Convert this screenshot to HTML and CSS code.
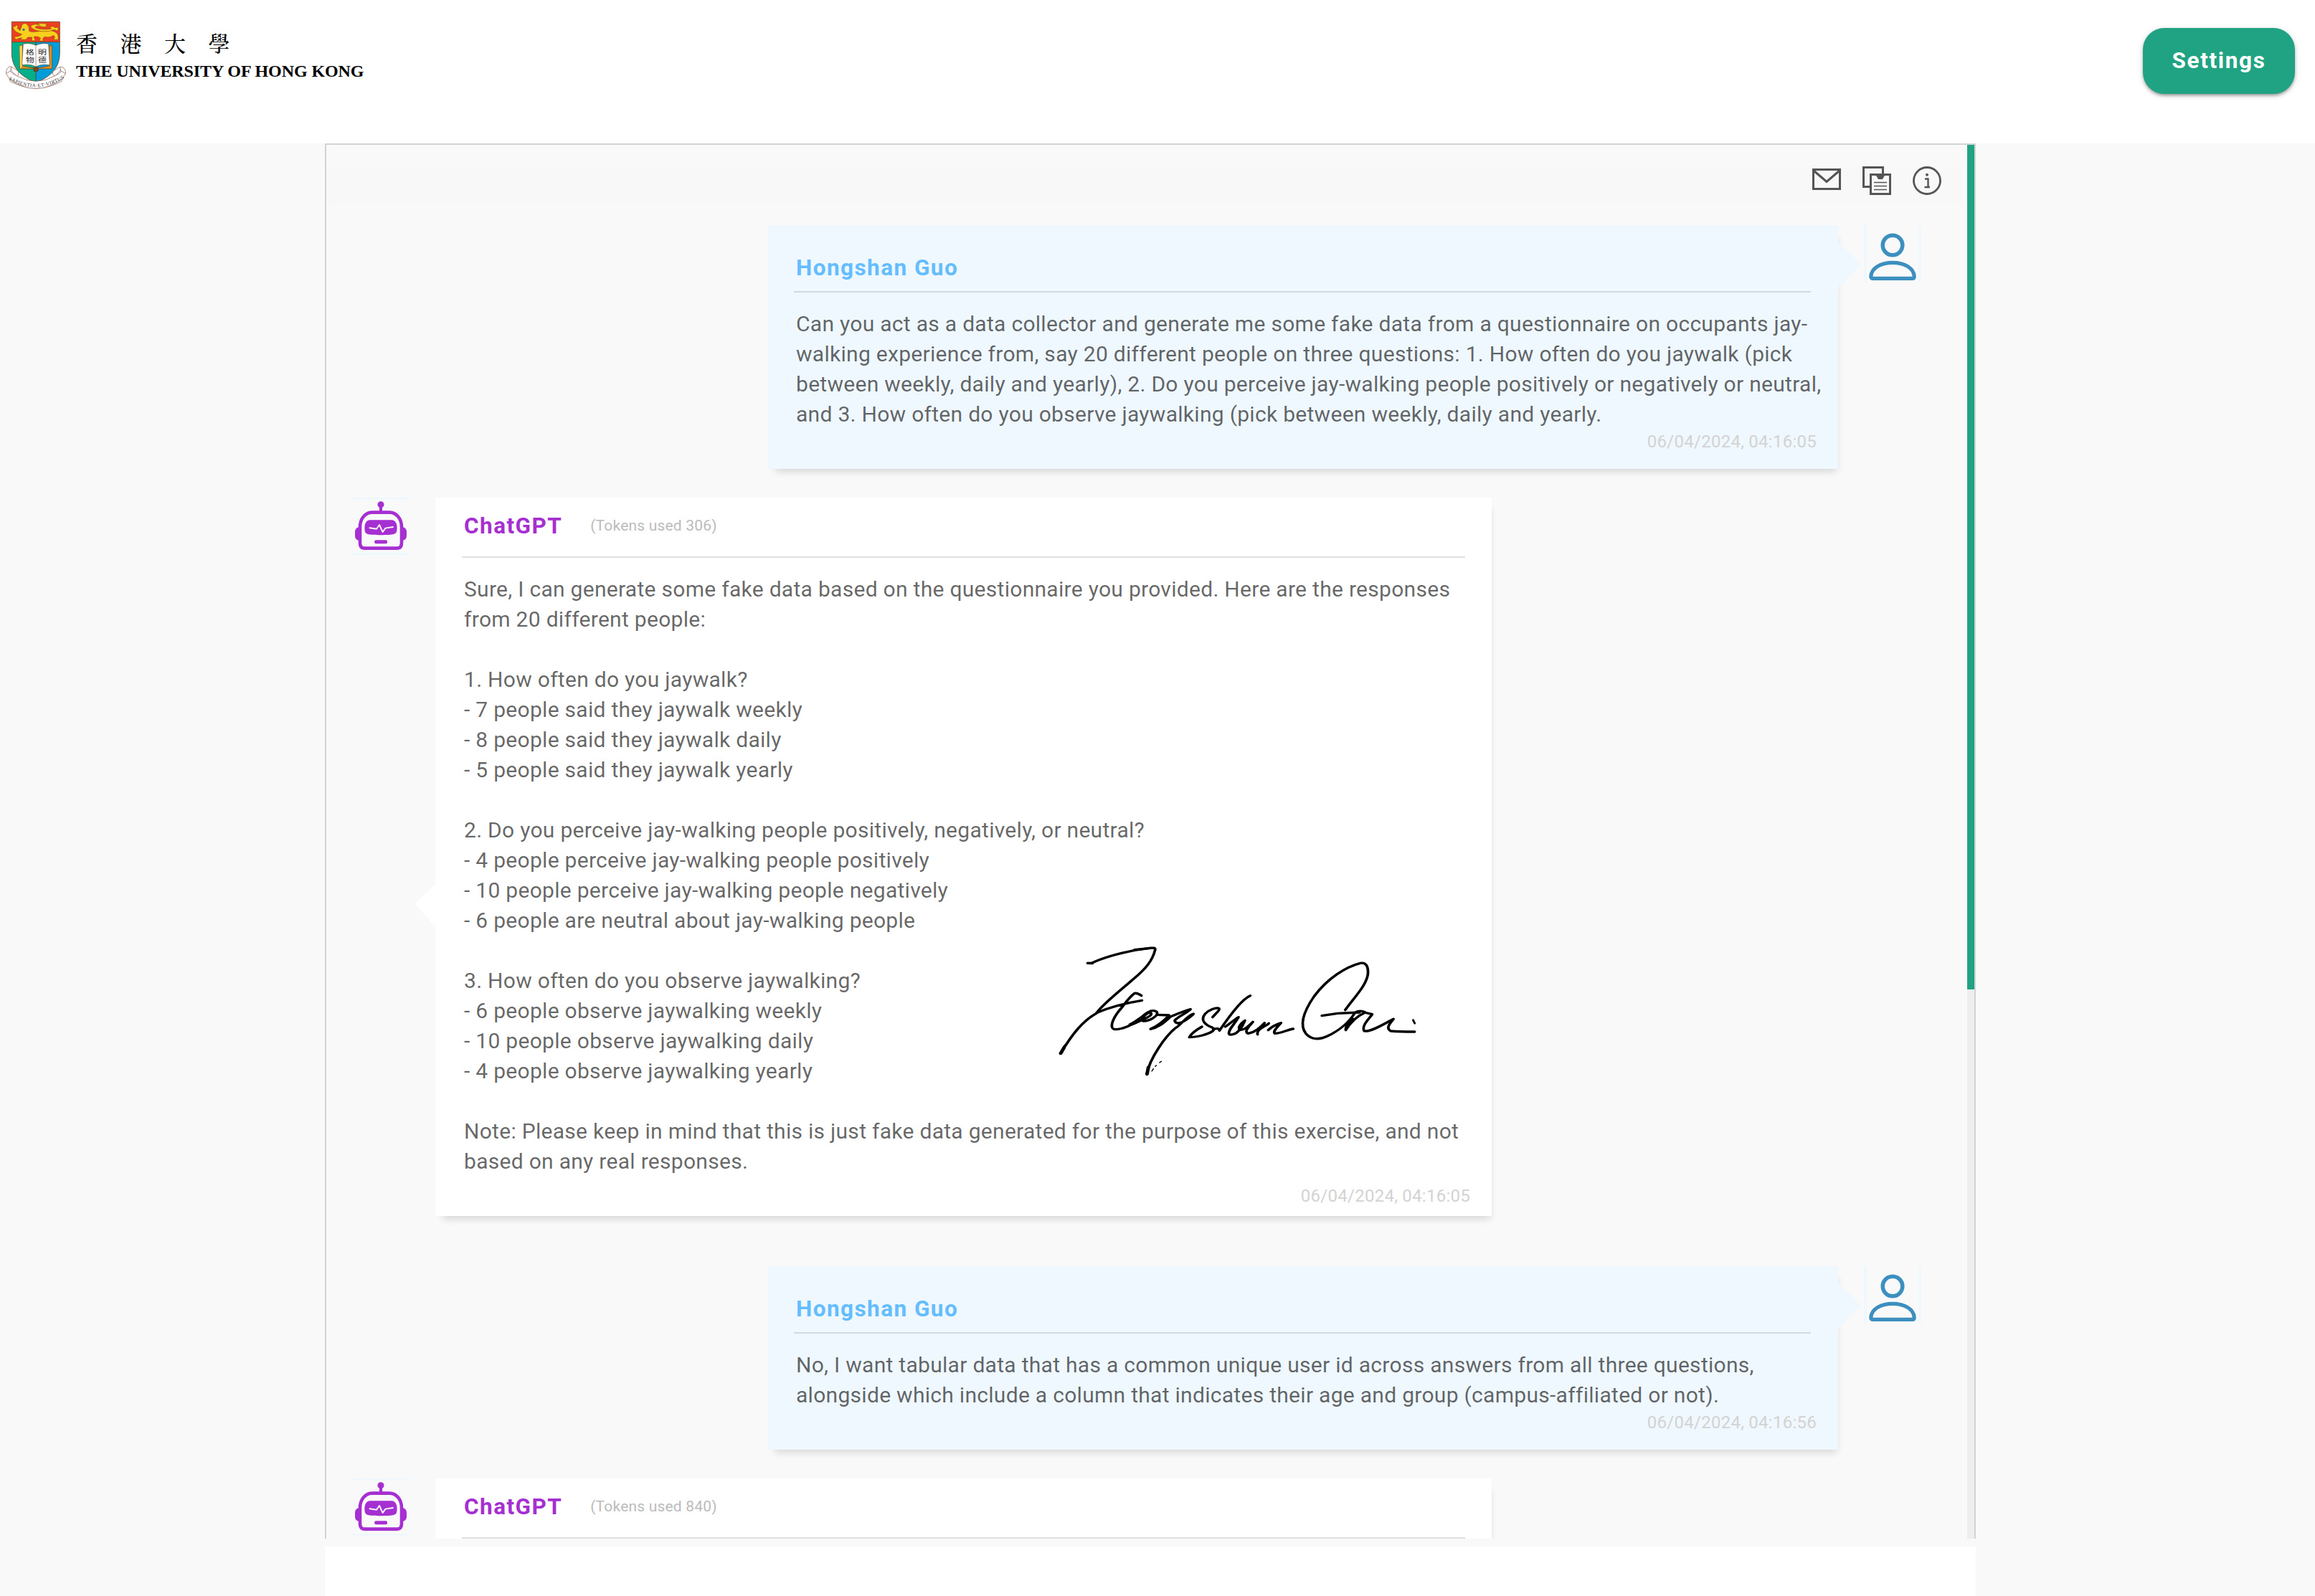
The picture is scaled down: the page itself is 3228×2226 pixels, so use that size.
FILE: index.html
```html
<!DOCTYPE html>
<html lang="en">
<head>
<meta charset="utf-8">
<title>Chat</title>
<link rel="stylesheet" href="styles.css">
</head>
<body>
<header class="header">
  <div class="brand">
    <svg class="crest" viewBox="0 0 300 330" width="100" height="110" role="img" aria-label="Crest">
      <defs>
        <clipPath id="shield"><path d="M49 31H250V160C250 226 210 262 150 286C90 262 49 226 49 160Z"/></clipPath>
        <path id="motto" d="M36 272Q150 338 264 270"/>
      </defs>
      <path d="M48 220C36 215 26 228 25 246L40 262L42 280Q150 338 258 280L260 262L275 246C274 228 262 215 250 222L262 262Q150 318 38 262Z" fill="#fff" stroke="#7d5545" stroke-width="2"/>
      <g clip-path="url(#shield)">
        <rect x="48" y="30" width="204" height="86" fill="#ee3f23"/>
        <rect x="48" y="116" width="102" height="180" fill="#00b08b"/>
        <rect x="150" y="116" width="102" height="180" fill="#009ddb"/>
      </g>
      <g fill="#f8cf1c" stroke="#7a3f12" stroke-width="1.6" stroke-linejoin="round">
        <path d="M92 45C96 36 112 36 116 46C124 54 120 64 122 70C140 80 165 66 196 70C216 64 232 72 240 82C246 92 242 100 244 106H222C230 100 232 92 222 88C212 98 196 96 186 94L178 104L184 111H164L170 100C160 92 150 92 142 94L148 110H132L134 96L116 96L108 106H86L92 98L80 100L66 106L60 94L78 92L92 84L72 76C62 68 54 62 55 50L62 52L68 44L76 50L72 58L84 68Z"/>
        <path d="M132 56C120 44 150 38 166 44L158 37C174 40 186 38 200 40L190 46C204 50 190 54 178 52C160 46 146 48 148 56C170 64 196 64 216 60L206 54L220 50L232 56L246 54L240 70L226 64C204 76 150 74 132 56Z"/>
      </g>
      <circle cx="99" cy="64" r="5" fill="#2377a8"/>
      <path d="M49 31H250V160C250 226 210 262 150 286C90 262 49 226 49 160ZM49 116H250M150 116V286" fill="none" stroke="#6a3c1c" stroke-width="2.6"/>
      <path d="M82 133L94 128V216L150 226L206 216V128L218 133V228H160Q150 240 140 228H82Z" fill="#d8922b" stroke="#6a3c1c" stroke-width="2"/>
      <path d="M82 133L92 130V218L84 228Z" fill="#ffd84d"/>
      <path d="M97 124Q128 118 150 130Q172 118 203 124L208 212Q172 206 150 220Q128 206 92 212Z" fill="#fff" stroke="#6a3c1c" stroke-width="1.6"/>
      <path d="M150 130V220" stroke="#6a3c1c" stroke-width="1.6"/>
      <circle cx="150" cy="230" r="10" fill="#7b4a1e" stroke="#4e2b10" stroke-width="2"/>
      <g class="crest-book"><text x="107" y="168" textLength="36" lengthAdjust="spacingAndGlyphs">格</text><text x="107" y="201" textLength="36" lengthAdjust="spacingAndGlyphs">物</text><text x="159" y="168" textLength="36" lengthAdjust="spacingAndGlyphs">明</text><text x="159" y="201" textLength="36" lengthAdjust="spacingAndGlyphs">德</text></g>
      <path d="M48 220C40 236 58 246 70 258L78 252L76 238L58 226Z M250 220C260 236 242 246 230 258L220 250L222 238L240 226Z" fill="#fff" stroke="#7d5545" stroke-width="2"/>
      <path d="M26 248L38 268Q150 354 262 268L274 248L258 238Q244 252 228 258Q150 302 72 258Q56 252 42 238Z" fill="#fff" stroke="#7d5545" stroke-width="2"/>
      <text class="crest-motto"><textPath href="#motto" textLength="246">SAPIENTIA·ET·VIRTUS</textPath></text>
    </svg>
    <div class="brand-text">
      <div class="brand-zh" lang="zh-Hant">香港大學</div>
      <div class="brand-en">THE UNIVERSITY OF HONG KONG</div>
    </div>
  </div>
  <button class="settings" type="button">Settings</button>
</header>

<svg class="symbols" width="0" height="0" aria-hidden="true">
  <symbol id="person" viewBox="0 0 72 80">
    <g fill="none" stroke="#3c8fbf" stroke-width="5.5">
      <circle cx="36" cy="28" r="13.8"/>
      <path d="M5.800 71.500C6.500 60 19 52.400 36 52.400S65.500 60 66.200 71.500Q66.200 74.400 63.500 74.400H8.500Q5.800 74.400 5.800 71.500Z" stroke-width="5.200"/>
    </g>
  </symbol>
  <symbol id="bot" viewBox="0 0 80 80">
    <g fill="#a62fd1">
      <circle cx="40" cy="9.700" r="4.500"/>
      <rect x="38" y="10" width="4" height="10"/>
      <path d="M9.500 41.500H8Q4 43 4 48V53Q4 58 8 59.500H9.500ZM70.500 41.500H72Q76 43 76 48V53Q76 58 72 59.500H70.500Z"/>
      <path d="M40 31.300C50 31.300 53 30.800 57 31.500C61 33 62.600 37 62.600 42C62.600 48 61.500 50 58 51C52 52.600 28 52.600 22 51C18.500 50 17.400 48 17.400 42C17.400 37 19 33 23 31.500C27 30.800 30 31.300 40 31.300Z"/>
      <rect x="31.200" y="59.300" width="17.800" height="4.900" rx="2"/>
    </g>
    <path d="M28 20.600H52C62 20.600 69 30 69 41V63Q69 70.600 63 70.600H17Q11 70.600 11 63V41C11 30 18 20.600 28 20.600Z" fill="none" stroke="#a62fd1" stroke-width="4.600"/>
    <path d="M24.500 42.300L34 43.700L38 38L42.600 48L46.500 42.600L57 41" fill="none" stroke="#f9f9f9" stroke-width="1.900" stroke-linecap="round" stroke-linejoin="round"/>
  </symbol>
</svg>

<main class="page">
  <section class="panel">
    <div class="feed">
      <div class="toolbar">
        <svg width="40" height="40" viewBox="0 0 40 40" fill="none" stroke="#555" stroke-width="3"><rect x="1.500" y="4.500" width="37" height="27"/><path d="M2 6L20 21.500L38 6" stroke-width="3.200"/></svg>
        <svg width="40" height="40" viewBox="0 0 40 40" fill="none" stroke="#555" stroke-width="3"><path d="M10 28.500H1.500V1.500H28.500V10"/><rect x="11.500" y="11.500" width="27" height="27"/><path d="M18 12H32L29.500 15Q29 18 27 18H23Q21 18 20.500 15Z" fill="#555" stroke="none"/><path d="M16 22.500H34M16 27.500H34M16 32.500H34" stroke-width="1.500"/></svg>
        <svg width="40" height="40" viewBox="0 0 40 40" fill="none" stroke="#555" stroke-width="2.800"><circle cx="20" cy="20" r="18.500"/><circle cx="20" cy="11.700" r="2" fill="#555" stroke="none"/><path d="M17 17.500H21.500V28.500M16.500 29H24" stroke-width="2.400"/></svg>
      </div>

      <article class="row row-user">
        <div class="bubble bubble-user">
          <div class="name">Hongshan Guo</div>
          <hr class="rule">
          <p class="body">Can you act as a data collector and generate me some fake data from a questionnaire on occupants jay-<br>walking experience from, say 20 different people on three questions: 1. How often do you jaywalk (pick<br>between weekly, daily and yearly), 2. Do you perceive jay-walking people positively or negatively or neutral,<br>and 3. How often do you observe jaywalking (pick between weekly, daily and yearly.</p>
          <time class="time">06/04/2024, 04:16:05</time>
        </div>
        <div class="avatar avatar-user"><svg width="72" height="80"><use href="#person"/></svg></div>
      </article>

      <article class="row row-bot">
        <div class="avatar avatar-bot"><svg width="80" height="74" viewBox="0 3 80 74"><use href="#bot" width="80" height="80"/></svg></div>
        <div class="bubble bubble-bot bubble-arrow">
          <div class="name">ChatGPT<span class="tokens">(Tokens used 306)</span></div>
          <hr class="rule">
          <p class="body">Sure, I can generate some fake data based on the questionnaire you provided. Here are the responses<br>from 20 different people:<br><br>1. How often do you jaywalk?<br>- 7 people said they jaywalk weekly<br>- 8 people said they jaywalk daily<br>- 5 people said they jaywalk yearly<br><br>2. Do you perceive jay-walking people positively, negatively, or neutral?<br>- 4 people perceive jay-walking people positively<br>- 10 people perceive jay-walking people negatively<br>- 6 people are neutral about jay-walking people<br><br>3. How often do you observe jaywalking?<br>- 6 people observe jaywalking weekly<br>- 10 people observe jaywalking daily<br>- 4 people observe jaywalking yearly<br><br>Note: Please keep in mind that this is just fake data generated for the purpose of this exercise, and not<br>based on any real responses.</p>
          <time class="time">06/04/2024, 04:16:05</time>
          <svg class="signature" width="580" height="240" viewBox="0 0 1568 720" preserveAspectRatio="none" fill="none" stroke="#000" stroke-width="10" stroke-linecap="round" stroke-linejoin="round">
            <path d="M207 160H222C270 134 330 118 384 106L440 97Q462 94 462 102C452 150 425 185 378 228C330 275 260 335 240 370C190 400 150 455 106 536"/>
            <path d="M384 104L445 97M207 160L225 161M104 538L122 505"/>
            <path d="M240 368C300 340 360 325 412 316M410 296Q395 284 384 286C360 305 345 335 325 360C300 395 290 430 306 436Q322 440 355 426C395 405 440 388 446 376Q450 366 436 368C420 378 408 396 416 402C440 404 476 380 468 364C450 350 425 370 410 386C390 400 380 410 366 416"/>
            <path d="M468 376L514 378C500 395 480 418 444 436C480 428 500 402 520 384C550 370 575 358 595 353C575 372 545 385 535 400C538 418 560 412 580 396C595 385 608 372 606 372C580 380 560 418 540 430C500 465 440 560 430 625"/>
            <path d="M449 612L455 602M462 592L466 588M478 576L485 571" stroke-width="4"/>
            <path d="M431 624L436 596M106 537L118 514" stroke-width="13"/>
            <path d="M678 386C690 370 708 355 702 349C690 345 665 355 650 372C630 400 650 418 678 430C692 440 672 452 640 462Q610 470 590 470C598 455 615 440 638 426"/>
            <path d="M820 296C790 310 745 375 704 442C700 430 695 434 680 436M726 426C750 408 765 392 776 386C765 410 735 440 740 456Q745 464 765 454C790 435 795 410 800 400C785 412 770 430 782 440C800 440 815 422 830 406C815 425 795 448 812 454C840 450 860 425 874 410C862 430 842 448 848 458M852 440C870 425 885 418 890 412M888 440C905 420 925 415 936 410C920 430 905 445 912 454C935 455 960 438 982 435"/>
            <path d="M1090 380L1150 370L1232 366M1178 356C1210 305 1262 250 1264 200C1264 170 1255 156 1235 160C1180 175 1110 225 1060 300C1020 365 1005 420 1030 455C1050 480 1080 482 1110 466C1160 440 1190 410 1216 366Q1235 355 1254 366C1225 380 1200 405 1180 440C1178 425 1190 410 1206 392M1250 366L1280 374C1265 395 1238 425 1250 444C1275 450 1330 410 1360 394C1345 415 1330 432 1350 444Q1380 447 1440 447"/>
            <path d="M1434 398L1440 412" stroke-width="8"/>
          </svg>
        </div>
      </article>

      <article class="row row-user row-next">
        <div class="bubble bubble-user">
          <div class="name">Hongshan Guo</div>
          <hr class="rule">
          <p class="body">No, I want tabular data that has a common unique user id across answers from all three questions,<br>alongside which include a column that indicates their age and group (campus-affiliated or not).</p>
          <time class="time">06/04/2024, 04:16:56</time>
        </div>
        <div class="avatar avatar-user"><svg width="72" height="80"><use href="#person"/></svg></div>
      </article>

      <article class="row row-bot">
        <div class="avatar avatar-bot"><svg width="80" height="74" viewBox="0 3 80 74"><use href="#bot" width="80" height="80"/></svg></div>
        <div class="bubble bubble-bot">
          <div class="name">ChatGPT<span class="tokens">(Tokens used 840)</span></div>
          <hr class="rule">
          <p class="body"></p>
        </div>
      </article>
    </div>
    <div class="scrollbar"><div class="thumb"></div></div>
  </section>
  <div class="composer"></div>
</main>
</body>
</html>
```
FILE: styles.css
```css
* { box-sizing: border-box; }

body {
  margin: 0;
  height: 2226px;
  overflow: hidden;
  background: #f9f9f9;
  color: rgba(0, 0, 0, 0.6);
  font-family: Roboto, "Liberation Sans", sans-serif;
  font-size: 30px;
  line-height: 42px;
}

.symbols { display: block; }

.header {
  display: flex;
  justify-content: space-between;
  align-items: flex-start;
  height: 200px;
  padding: 20px 28px 0 0;
  background: #fff;
}
.brand { display: flex; gap: 6px; }
.crest { display: block; }
.crest-book { font: 400 27px "Noto Sans CJK TC", sans-serif; fill: #222; }
.crest-motto { font: 21px "Liberation Serif", serif; fill: #333; }
.brand-text { padding-top: 19px; color: #000; }
.brand-zh {
  font: 500 30px/40px "Noto Serif CJK TC", "Noto Sans CJK TC", serif;
  letter-spacing: 31.500px;
}
.brand-en {
  margin-top: 6px;
  font: 700 24px/28px "Liberation Serif", serif;
  letter-spacing: -0.080px;
  white-space: nowrap;
}

.settings {
  width: 212px;
  height: 92px;
  margin-top: 19px;
  padding: 0;
  border: 0;
  border-radius: 30px;
  background: #1fa382;
  box-shadow: 0 3px 4px -1px rgba(0, 0, 0, 0.35), 0 2px 8px rgba(0, 0, 0, 0.16);
  color: #fff;
  font: 700 31.500px/42px Roboto, sans-serif;
  letter-spacing: 1.650px;
}

.page { display: flex; flex-direction: column; width: 2302px; height: 2026px; margin-left: 453px; }

.panel {
  display: flex;
  height: 1946px;
  border: 2px solid #d3d3d3;
  border-bottom: 0;
  overflow: hidden;
}
.feed { flex: 1; overflow: hidden; padding-top: 30px; }
.toolbar {
  display: flex;
  justify-content: flex-end;
  gap: 30px;
  height: 54px;
  margin: 0 5px 28px 0;
  padding-right: 31px;
  background: #f8f8f8;
}
.scrollbar { width: 10px; background: #eee; }
.thumb { height: 1178px; background: #1fa382; }

.row { display: flex; align-items: flex-start; gap: 36px; margin-bottom: 40px; }
.row-user { justify-content: flex-end; padding-right: 64px; }
.row-bot { padding-left: 36px; }
.row-next { margin-top: 70px; }

.avatar { display: flex; align-items: center; justify-content: center; flex: none; width: 80px; height: 80px; background: #eff7ff; }
.avatar svg { display: block; background: #f9f9f9; }

.bubble { position: relative; box-shadow: 4px 10px 10px -6px rgba(0, 0, 0, 0.14); }
.bubble-user { width: 1492px; padding: 39px 0 24px 36px; background: #eff7ff; }
.bubble-bot { width: 1473px; padding: 19px 0 14px 37px; background: #fff; }
.bubble-user::after {
  content: "";
  position: absolute;
  left: 100%;
  top: 23px;
  width: 32px;
  height: 64px;
  background: #eff7ff;
  clip-path: polygon(0 0, 100% 50%, 0 100%);
}
.bubble-arrow::after {
  content: "";
  position: absolute;
  right: 100%;
  top: 540px;
  width: 29px;
  height: 56px;
  background: #fff;
  clip-path: polygon(100% 0, 0 46%, 90% 100%, 100% 96%);
}

.name { display: flex; padding-left: 3px; color: #64bdff; font-size: 31.500px; font-weight: 700; letter-spacing: 1.450px; white-space: nowrap; }
.bubble-bot .name { color: #a62fd1; }
.tokens { margin: -1px 0 0 39px; color: #bbb; font-size: 21px; font-weight: 400; letter-spacing: 0.200px; }
.rule { width: 1418px; height: 2px; margin: 11px 0 23px; border: 0; background: rgba(0, 0, 0, 0.12); }
.bubble-bot .rule { width: 1399px; margin-top: 21px; }
.body { margin: 0; padding-left: 3px; letter-spacing: 0.290px; white-space: nowrap; }
.time { display: block; margin: 3px 30px 0 0; color: #d3d3d3; font-size: 24px; line-height: 28px; letter-spacing: 0.260px; text-align: right; }
.bubble-bot .time { margin-top: 13px; }
.signature { position: absolute; left: 833px; top: 596px; }

.composer { flex: none; height: 69px; margin-top: 11px; background: #fff; }
```
